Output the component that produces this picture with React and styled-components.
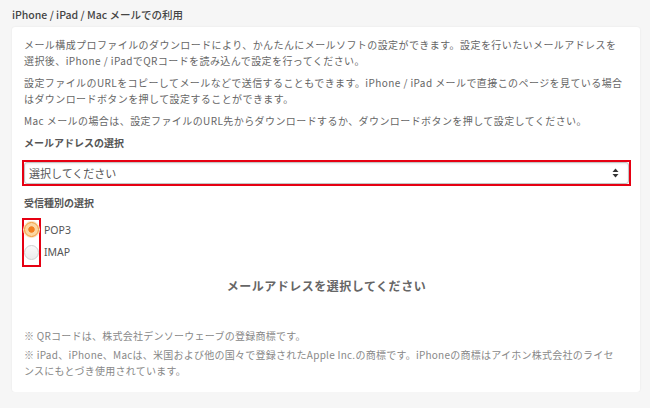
import styled, { createGlobalStyle } from "styled-components";

const GlobalStyle = createGlobalStyle`
  body {
    margin: 0;
    background: #f6f6f6;
    font-family: "Noto Sans CJK JP", "Noto Sans", sans-serif;
  }
`;

const Page = styled.div`
  padding: 7px 10px 0 12px;
`;

const Title = styled.h2`
  margin: 0 0 4px 0;
  font-size: 10.5px;
  line-height: 16px;
  font-weight: 500;
  color: #444;
`;

const Card = styled.div`
  background: #fff;
  border-radius: 3px;
  box-shadow: 0 0 2px rgba(0, 0, 0, 0.08);
  padding: 10px 9px 10px 10px;
`;

const Text = styled.p`
  margin: 0 0 6px 0;
  padding-left: 2px;
  font-size: 10px;
  letter-spacing: 0.42px;
  line-height: 16px;
  color: #666;
`;

const Label = styled.div`
  margin: ${({ top }) => top}px 0 ${({ bottom }) => bottom}px 2px;
  font-size: 10px;
  font-weight: 700;
  line-height: 16px;
  color: #555;
`;

const Highlight = styled.div`
  border: 2px solid #e60012;
  display: ${({ inline }) => (inline ? "inline-flex" : "flex")};
  flex-direction: column;
`;

const SelectBox = styled.div`
  height: 20px;
  border: 1px solid #c4c4c4;
  border-radius: 3px;
  box-shadow: inset 0 1px 2px rgba(0, 0, 0, 0.08);
  display: flex;
  align-items: center;
  justify-content: space-between;
  padding: 0 9px 0 4px;
  font-size: 11px;
  color: #555;
`;

const RadioArea = styled.div`
  display: flex;
  align-items: flex-start;
`;

const RadioCol = styled.div`
  display: flex;
  flex-direction: column;
  gap: 8px;
  padding: 2px 0 5px 0;
`;

const Radio = styled.span`
  width: 13px;
  height: 13px;
  border-radius: 50%;
  border: 1px solid ${({ checked }) => (checked ? "#f0962e" : "#cfcfcf")};
  background: ${({ checked }) =>
    checked
      ? "radial-gradient(circle, #f2801f 0 2.8px, #fbd6a2 3.6px)"
      : "linear-gradient(#fafafa, #ececec)"};
  box-shadow: ${({ checked }) => (checked ? "0 0 0 1px #fce3c0" : "none")};
`;

const LabelCol = styled.div`
  display: flex;
  flex-direction: column;
  gap: 6px;
  padding: 4px 0 0 3px;
`;

const RadioText = styled.span`
  font-size: 10.5px;
  line-height: 16px;
  color: #555;
  font-family: "Noto Sans", sans-serif;
`;

const Message = styled.div`
  margin: 11px 0 34px 0;
  text-align: center;
  font-size: 12px;
  letter-spacing: 0.5px;
  font-weight: 700;
  line-height: 16px;
  color: #666;
`;

const Note = styled.p`
  margin: 0 0 3px 0;
  padding-left: 2px;
  font-size: 10px;
  letter-spacing: 0.25px;
  line-height: 16px;
  color: #888;
`;

const Arrows = () => (
  <svg width="7" height="10" viewBox="0 0 7 10">
    <path d="M3.5 0.5 L6.5 4 H0.5 Z" fill="#333" />
    <path d="M3.5 9.5 L6.5 6 H0.5 Z" fill="#333" />
  </svg>
);

const App = () => {
  return (
    <Page>
      <GlobalStyle />
      <Title>iPhone / iPad / Mac メールでの利用</Title>
      <Card>
        <Text>
          メール構成プロファイルのダウンロードにより、かんたんにメールソフトの設定ができます。設定を行いたいメールアドレスを
          <br />
          選択後、iPhone / iPadでQRコードを読み込んで設定を行ってください。
        </Text>
        <Text>
          設定ファイルのURLをコピーしてメールなどで送信することもできます。iPhone / iPad メールで直接このページを見ている場合
          <br />
          はダウンロードボタンを押して設定することができます。
        </Text>
        <Text>
          Mac メールの場合は、設定ファイルのURL先からダウンロードするか、ダウンロードボタンを押して設定してください。
        </Text>

        <Label top={6} bottom={9}>メールアドレスの選択</Label>
        <Highlight>
          <SelectBox>
            <span>選択してください</span>
            <Arrows />
          </SelectBox>
        </Highlight>

        <Label top={9} bottom={7}>受信種別の選択</Label>
        <RadioArea>
          <Highlight inline>
            <RadioCol>
              <Radio checked />
              <Radio />
            </RadioCol>
          </Highlight>
          <LabelCol>
            <RadioText>POP3</RadioText>
            <RadioText>IMAP</RadioText>
          </LabelCol>
        </RadioArea>

        <Message>メールアドレスを選択してください</Message>

        <Note>※ QRコードは、株式会社デンソーウェーブの登録商標です。</Note>
        <Note>
          ※ iPad、iPhone、Macは、米国および他の国々で登録されたApple Inc.の商標です。iPhoneの商標はアイホン株式会社のライセ
          <br />
          ンスにもとづき使用されています。
        </Note>
      </Card>
    </Page>
  );
};

export default App;
